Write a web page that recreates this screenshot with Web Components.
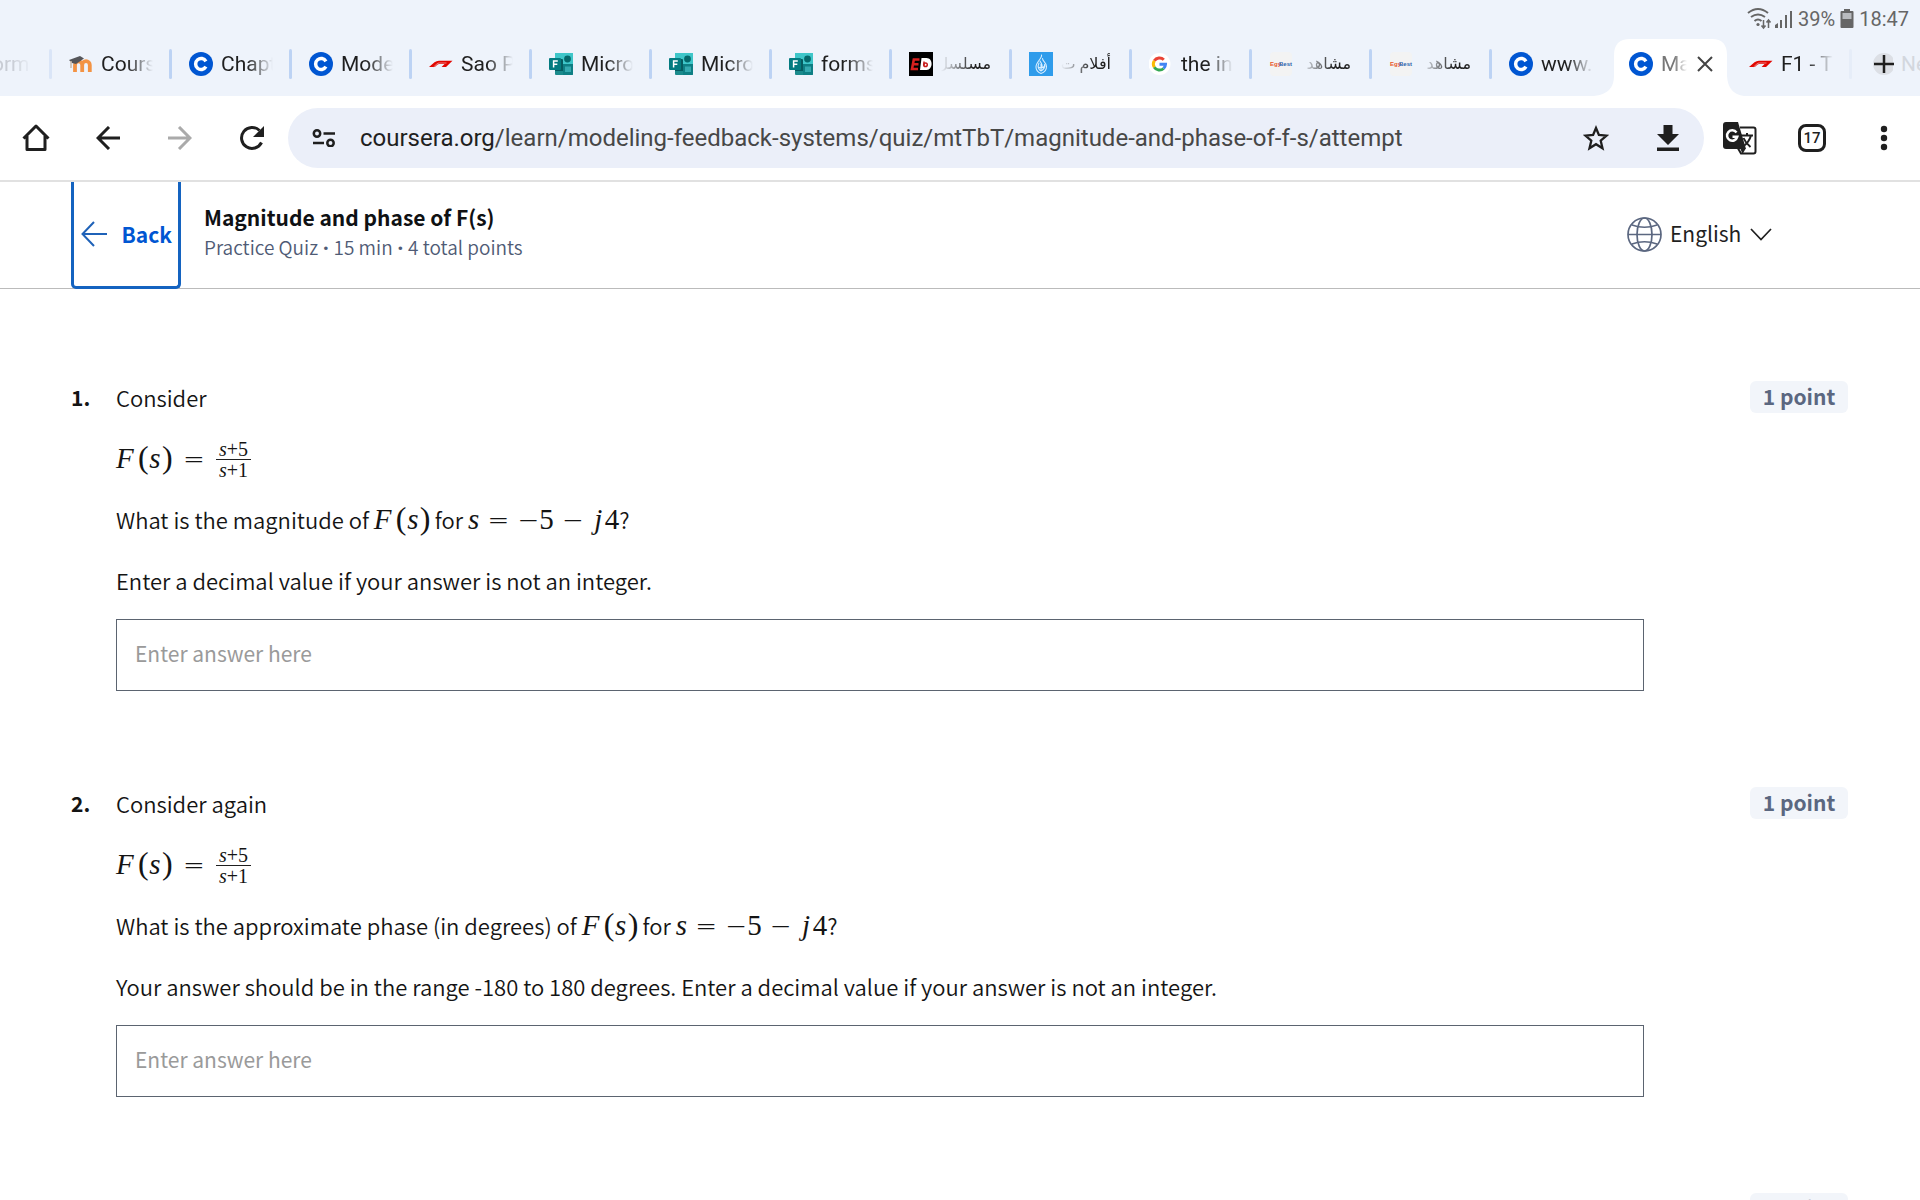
<!DOCTYPE html>
<html lang="en">
<head>
<meta charset="utf-8">
<title>Magnitude and phase of F(s)</title>
<style>
html, body { margin: 0; height: 100%; }
body { background: #fff; color: #1f1f1f; font-family: "Noto Sans CJK SC", "Open Sans", sans-serif; font-size: 22px; }
.dot { font-family: Roboto, sans-serif; }
</style>
</head>
<body>
<browser-window>
  <status-bar slot="status"></status-bar>
  <tab-strip slot="tabs">
    <browser-tab class="cut">orm</browser-tab>
    <browser-tab icon="moodle">Course</browser-tab>
    <browser-tab icon="coursera">Chapter</browser-tab>
    <browser-tab icon="coursera">Model</browser-tab>
    <browser-tab icon="f1">Sao Paulo</browser-tab>
    <browser-tab icon="forms">Micros</browser-tab>
    <browser-tab icon="forms">Micros</browser-tab>
    <browser-tab icon="forms">forms</browser-tab>
    <browser-tab icon="ed" rtl>مسلسل</browser-tab>
    <browser-tab icon="jazeera" rtl>أفلام ت</browser-tab>
    <browser-tab icon="google">the in</browser-tab>
    <browser-tab icon="egybest" rtl>مشاهد</browser-tab>
    <browser-tab icon="egybest" rtl>مشاهد</browser-tab>
    <browser-tab icon="coursera" nodivider>www.</browser-tab>
    <browser-tab icon="coursera" active>Mag</browser-tab>
    <browser-tab icon="f1" faint>F1 - T</browser-tab>
    <browser-tab icon="blank" nodivider dim>Ne</browser-tab>
  </tab-strip>
  <tool-bar slot="toolbar"></tool-bar>
  <quiz-header>
    <span slot="title">Magnitude and phase of F(s)</span>
    <span slot="meta">Practice Quiz<span class="dot"> • </span>15 min<span class="dot"> • </span>4 total points</span>
  </quiz-header>
  <quiz-list>
    <quiz-question number="1.">
      <p>Consider</p>
      <p><math-fn></math-fn><math-eq></math-eq><math-frac><span slot="top"><i>s</i>+5</span><span slot="bottom"><i>s</i>+1</span></math-frac></p>
      <p>What is the magnitude of <math-fn></math-fn> for <math-value></math-value>?</p>
      <span slot="hint">Enter a decimal value if your answer is not an integer.</span>
    </quiz-question>
    <quiz-question number="2.">
      <p>Consider again</p>
      <p><math-fn></math-fn><math-eq></math-eq><math-frac><span slot="top"><i>s</i>+5</span><span slot="bottom"><i>s</i>+1</span></math-frac></p>
      <p>What is the approximate phase (in degrees) of <math-fn></math-fn> for <math-value></math-value>?</p>
      <span slot="hint">Your answer should be in the range -180 to 180 degrees. Enter a decimal value if your answer is not an integer.</span>
    </quiz-question>
    <quiz-question></quiz-question>
  </quiz-list>
</browser-window>

<script>
const define = (name, html) => customElements.define(name, class extends HTMLElement {
  constructor() {
    super();
    this.attachShadow({ mode: 'open' }).innerHTML = typeof html === 'function' ? html(this) : html;
  }
});

const icons = {
  blank: `<circle cx="15" cy="12" r="11" fill="#dcdfe5"/>`,
  coursera: `<circle cx="12" cy="12" r="12" fill="#0056d2"/><path d="M16.9 9.3A5.5 5.5 0 1 0 16.9 14.7" fill="none" stroke="#fff" stroke-width="3.5"/>`,
  moodle: `<path d="M6 20V13a3.6 3.6 0 0 1 7.2 0v7M13.2 13a3.6 3.6 0 0 1 7.6 0v7" fill="none" stroke="#f39344" stroke-width="3.8"/><path d="M0 8 11 4l4 2.500-8 5.500-4-1z" fill="#55565a"/><path d="M2 9v7" stroke="#c9b9a8" stroke-width="1.500"/>`,
  f1: `<path d="M0 15 5.500 10.200Q7.500 8.700 10 8.700H23.500L17 15H12.600L15.500 12H10.200Q9 12 8 12.900L5.800 15z" fill="#e10600"/><path d="M4.600 15 7.800 12Q8.800 11 10.300 11H17.500" fill="none" stroke="#f4b5b4" stroke-width=".7"/>`,
  forms: `<rect x="6" y="1" width="18" height="22" rx="1" fill="#1a8a8c"/><path d="M6 1h18v11H6z" fill="#3fc6c9"/><path d="M14 12h10v10a1 1 0 0 1-1 1h-9z" fill="#0f7f84"/><circle cx="18.500" cy="7" r="3.400" fill="#05686b"/><rect x="16" y="14.500" width="6" height="5.500" fill="#35aab0"/><path d="M6 7h7a1 1 0 0 1 1 1v11H6z" fill="#065b60"/><rect y="6" width="12" height="12" rx="1" fill="#047b80"/><path d="M4.600 15.500V9h4.200M4.600 12.300h3.700" fill="none" stroke="#fff" stroke-width="1.500"/>`,
  ed: `<rect width="24" height="24" fill="#000"/><path d="M10.500 7.500H4.800L3 17H9M4 12.200h5.500" fill="none" stroke="#d8201f" stroke-width="2.600"/><path d="M12.500 6h5c7 0 6.500 12 0 12H11z" fill="#fff"/><path d="M15 9.500v4" stroke="#c61b1b" stroke-width="1.500"/><circle cx="16.500" cy="12.800" r="1.800" fill="none" stroke="#c61b1b" stroke-width="1.500"/>`,
  jazeera: `<rect width="24" height="24" fill="#2f9ceb"/><g fill="none" stroke="#d8eeff" stroke-width="1.100" stroke-linecap="round"><path d="M12.500 3c1 3-5.500 7-5.500 12 0 3 2.400 5.500 5 6.500 3-1 5.500-3.500 5.500-7 0-4-4-5-4-8"/><path d="M10 11c-2 4 0 7 2 8 2-1 4-3 3.500-6.500M11 9c1.500 3 3 3 2 7M9 15c2 1 5 1 7-1M12 12v6"/></g>`,
  google: `<circle cx="10.500" cy="12" r="11" fill="#fff"/><g fill="none" stroke-width="3"><path d="M14.800 7.700A6.100 6.100 0 0 0 5.300 8.800" stroke="#ea4335"/><path d="M5.300 8.800a6.100 6.100 0 0 0 0 6.400" stroke="#fbbc04"/><path d="M5.300 15.200a6.100 6.100 0 0 0 9.300 1.300" stroke="#34a853"/><path d="M14.600 16.500a6.100 6.100 0 0 0 1.900-4.200h-6" stroke="#4285f4"/></g>`,
  egybest: `<rect x="1" width="22" height="24" rx="4" fill="#f3f3f3"/><g font-family="Liberation Sans Narrow, Liberation Sans" font-weight="700" font-size="6"><text x="1" y="14" fill="#e8572a">Egy</text><text x="10" y="14" fill="#2a63ae">Best</text></g>`
};
const svg = (w, h, body, box) => `<svg width="${w}" height="${h}" viewBox="${box || `0 0 ${w} ${h}`}" aria-hidden="true">${body}</svg>`;

define('browser-window', `<style>
:host { display: flex; flex-direction: column; height: 100vh; overflow: hidden; }
.top { background: #eef3fb; flex: none; }
main { flex: 1; min-height: 0; overflow: hidden; }
</style><div class="top"><slot name="status"></slot><slot name="tabs"></slot></div><slot name="toolbar"></slot><main><slot></slot></main>`);

define('status-bar', `<style>
:host { display: flex; justify-content: flex-end; align-items: center; gap: 5px; height: 38px; margin-bottom: -1px; padding-right: 11px; font: 20px/38px Roboto, sans-serif; color: #666; }
svg { display: block; }
</style>
${svg(46, 24, `<g fill="none" stroke="#666" stroke-width="2"><path d="M1 6q10-8 20 0M4 10q7-5 14 0M7.500 14q3.500-3 7 0"/></g><circle cx="11" cy="17.500" r="1.600" fill="#666"/><g stroke="#666" stroke-width="1.500" fill="none"><path d="M16.500 13v8m-2-2.500 2 2.500 2-2.500M21.500 21v-8m-2 2.500 2-2.500 2 2.500"/></g><g fill="#666"><path d="M28 21v-3l3-2v5z"/><path d="M33 13h2v8h-2zM38 8h2v13h-2zM43 4h2v17h-2z"/></g>`)}
<span>39%</span>
${svg(14, 24, `<path d="M4 2h6v2h2.500q1 0 1 1v15q0 1-1 1h-11q-1 0-1-1V5q0-1 1-1H4z" fill="#666"/><path d="M2.500 6h9v6h-9z" fill="#b9bbbf"/>`)}
<span>18:47</span>`);

define('tab-strip', `<style>
:host { display: flex; height: 59px; overflow: hidden; position: relative; }
::slotted(browser-tab) { flex: none; }
button { position: absolute; right: 0; top: 0; width: 72px; height: 53px; border: 0; padding: 0; background: none; color: #1f1f1f; }
svg { display: block; margin: 0 auto; }
</style><slot></slot><button aria-label="New tab">${svg(24, 24, `<path d="M12 3v18M2 12h20" stroke="#1f1f1f" stroke-width="2.500" fill="none"/>`)}</button>`);

define('browser-tab', el => {
  const active = el.hasAttribute('active'), icon = el.getAttribute('icon');
  return `<style>
:host { display: flex; align-items: center; position: relative; box-sizing: border-box; width: 120px; height: 53px; padding: 0 17px 0 19px; font: 21px/30px Roboto, "DejaVu Sans", sans-serif; color: #1f1f1f; }
:host(.cut) { width: 50px; padding: 0; color: #c8ccd4; }
:host(.cut) .label { width: 40px; margin-left: -8px; }
:host(:not([nodivider]):not([active]))::after { content: ""; position: absolute; right: -2px; top: 12px; width: 3px; height: 30px; border-radius: 2px; background: #bdd3f4; }
:host(.cut)::after { background: #dae5f7 !important; }
:host([faint])::after { background: #e6edf8 !important; }
:host([dim]) .label { color: #d3d7de; -webkit-mask-image: none; mask-image: none; }
.tab { display: flex; align-items: center; gap: 8px; border: 0; padding: 0; background: none; color: inherit; font: inherit; text-align: left; }
.label { width: 52px; overflow: hidden; white-space: nowrap; -webkit-mask-image: linear-gradient(to right, #000 50%, transparent); mask-image: linear-gradient(to right, #000 50%, transparent); }
:host([rtl]) .label { direction: rtl; text-align: right; font-size: 16px; width: 50px; -webkit-mask-image: linear-gradient(to left, #000 35%, transparent); mask-image: linear-gradient(to left, #000 35%, transparent); }
svg { display: block; flex: none; }
:host([active]) { z-index: 1; }
:host([active]) .label { width: 26px; color: #777; }
.shape { position: absolute; left: -16px; top: 2px; }
:host([active]) .tab { position: relative; }
.close { position: relative; border: 0; padding: 0; background: none; margin-left: 9px; }
</style>
${active ? `<svg class="shape" width="150" height="57" viewBox="0 0 150 57"><path d="M0 57Q20 55 20 37V16Q20 0 36 0H118Q133 0 133 16V37Q134 55 150 57Z" fill="#fff"/></svg>` : ''}
<button class="tab">${icon ? svg(24, 24, icons[icon]) : ''}<span class="label"><slot></slot></span></button>
${active ? `<button class="close" aria-label="Close tab">${svg(18, 18, `<path d="M2 2 16 16M16 2 2 16" stroke="#444" stroke-width="2"/>`)}</button>` : ''}`;
});

define('tool-bar', `<style>
:host { display: flex; align-items: center; flex: none; height: 84px; border-bottom: 2px solid #e1e1e1; background: #fff; }
button { flex: none; display: flex; align-items: center; justify-content: center; width: 72px; height: 60px; padding: 0; border: 0; background: none; }
form { flex: 1; min-width: 0; display: flex; align-items: center; height: 60px; border-radius: 30px; background: #ebeff9; }
.url { flex: 1; min-width: 0; font: 24px/60px Roboto, sans-serif; color: #474747; white-space: nowrap; overflow: hidden; }
b { font-weight: 400; color: #1f1f1f; }
.count { display: flex; align-items: center; justify-content: center; box-sizing: border-box; width: 28px; height: 28px; border: 3px solid #1f1f1f; border-radius: 8px; font: 500 15px/20px Roboto, sans-serif; color: #1f1f1f; }
</style>
<button aria-label="Home">${svg(28, 28, `<path d="M1.500 14.500 14 2l12.500 12.500M5 12v13.500h18V12" fill="none" stroke="#1f1f1f" stroke-width="3" stroke-linejoin="round"/>`)}</button>
<button aria-label="Back">${svg(24, 24, `<path d="M24 12H2M13 1 2 12l11 11" fill="none" stroke="#1f1f1f" stroke-width="3"/>`)}</button>
<button aria-label="Forward">${svg(24, 24, `<path d="M0 12h22M11 1l11 11-11 11" fill="none" stroke="#aaa" stroke-width="3"/>`)}</button>
<button aria-label="Reload">${svg(26, 26, `<path d="M22.500 17.500A10.500 10.500 0 1 1 20.500 5.500" fill="none" stroke="#1f1f1f" stroke-width="3"/><path d="M25 1v11H14z" fill="#1f1f1f"/>`)}</button>
<form onsubmit="return false">
<button type="button" aria-label="Site information">${svg(24, 18, `<g fill="none" stroke="#1f1f1f" stroke-width="2.500"><circle cx="5" cy="4.500" r="3.200"/><path d="M11.500 4.500H23M1 14h11"/><circle cx="18.500" cy="14" r="3.200"/></g>`)}</button>
<div class="url"><b>coursera.org</b>/learn/modeling-feedback-systems/quiz/mtTbT/magnitude-and-phase-of-f-s/attempt</div>
<button type="button" aria-label="Bookmark">${svg(26, 26, `<path d="m13 3 2.900 7 7.600.7-5.800 5 1.800 7.500-6.500-4-6.500 4 1.800-7.500-5.800-5 7.600-.7z" fill="none" stroke="#1f1f1f" stroke-width="2.300"/>`)}</button>
<button type="button" aria-label="Download">${svg(24, 26, `<path d="M7.500 0h9v9H23L12 20 1 9h6.500zM1 22.500h22V26H1z" fill="#1f1f1f"/>`)}</button>
</form>
<button aria-label="Translate">${svg(34, 34, `<path d="M17 6.500h13.500a2 2 0 0 1 2 2v22a2 2 0 0 1-2 2H18l-3.500-6" fill="none" stroke="#1f1f1f" stroke-width="2"/><path d="M3 1h12l8 27H3a3 3 0 0 1-3-3V4a3 3 0 0 1 3-3z" fill="#1f1f1f"/><path d="M13.500 11.500a5.200 5.200 0 1 0 .8 4.300H9.500" fill="none" stroke="#fff" stroke-width="2.500"/><path d="M18 14.500h12M24 12v2.500M28 14.500q-2 7-8 11M20.500 17q2 5 7 9" fill="none" stroke="#1f1f1f" stroke-width="2"/><path d="m17.500 28 5 0-3 5z" fill="#1f1f1f"/>`)}</button>
<button aria-label="Open tabs"><span class="count">17</span></button>
<button aria-label="Menu">${svg(8, 26, `<g fill="#1f1f1f"><circle cx="4" cy="4" r="3.200"/><circle cx="4" cy="13" r="3.200"/><circle cx="4" cy="22" r="3.200"/></g>`)}</button>`);

define('quiz-header', `<style>
:host { display: flex; align-items: center; height: 107px; padding: 0 148px 0 71px; box-shadow: inset 0 -1px #bbb; }
.back { align-self: stretch; display: flex; align-items: center; justify-content: space-between; box-sizing: border-box; width: 110px; padding: 0 6px 0 7px; border: solid #1463c0; border-width: 0 3px 3px; border-radius: 0 0 5px 5px; background: #fff; color: #0056d2; font: 700 21px/32px "Noto Sans CJK SC", sans-serif; text-decoration: none; }
.titles { flex: 1; margin-left: 23px; padding-bottom: 6px; color: #0f1114; }
h1 { margin: 0; font-size: 21px; line-height: 30px; font-weight: 700; }
.meta { font-size: 19px; line-height: 30px; font-weight: 350; color: #4f5b75; }
label { display: flex; align-items: center; padding-bottom: 2px; }
select { appearance: none; border: 0; padding: 0 0 4px; margin: 0 8px; background: none; font: 21px/32px "Noto Sans CJK SC", sans-serif; color: #1f1f1f; }
svg { display: block; }
</style>
<a class="back" href="#">${svg(26, 26, `<path d="M26 13H1.500M13 1 1.500 13 13 25" fill="none" stroke="#1f62b8" stroke-width="2"/>`)}<span>Back</span></a>
<div class="titles"><h1><slot name="title"></slot></h1><div class="meta"><slot name="meta"></slot></div></div>
<label>${svg(35, 35, `<g fill="none" stroke="#5b6780" stroke-width="1.700"><circle cx="17.500" cy="17.500" r="16.500"/><ellipse cx="17.500" cy="17.500" rx="7.500" ry="16.500"/><path d="M1 17.500h33M5 8q12.500 4.500 25 0M5 27q12.500-4.500 25 0"/></g>`)}
<select aria-label="Language"><option>English</option></select>
${svg(22, 13, `<path d="M1 1l10 10.500L21 1" fill="none" stroke="#1f1f1f" stroke-width="1.700"/>`)}</label>`);

define('quiz-list', `<style>:host { display: flex; flex-direction: column; gap: 94px; padding: 90px 71px 0; }</style><slot></slot>`);

define('quiz-question', el => `<style>
:host { display: flex; align-items: flex-start; color: #141414; font-weight: 350; }
.num { flex: none; width: 45px; line-height: 36px; font-weight: 700; font-size: 21px; }
.body { flex: 1; min-width: 0; display: flex; flex-direction: column; gap: 25px; }
::slotted(p) { margin: 0; height: 36px; line-height: 36px; white-space: nowrap; }
label { display: block; line-height: 36px; }
input { box-sizing: border-box; width: 100%; height: 72px; margin-top: -4px; padding: 0 18px 4px; border: 1px solid #5b6470; border-radius: 0; font: 21px/32px "Noto Sans CJK SC", sans-serif; color: #1f1f1f; display: block; }
input::placeholder { color: #9a9a9a; opacity: 1; }
.points { flex: none; margin: 2px 1px 0 106px; width: 98px; height: 32px; border-radius: 6px; background: #f2f5fa; color: #5b6780; text-align: center; font-size: 21px; line-height: 30px; font-weight: 700; }
</style>
<div class="num">${el.getAttribute('number') || ''}</div>
<div class="body"><slot></slot>${el.hasAttribute('number') ? `<label for="answer"><slot name="hint"></slot></label><input id="answer" placeholder="Enter answer here">` : ''}</div>
<div class="points">1 point</div>`);

const mathStyle = `:host { display: inline-block; font-family: "Liberation Serif", serif; font-weight: 400; font-size: 29px; line-height: 30px; vertical-align: baseline; } span { display: inline-block; } .op { font-family: "DejaVu Sans", sans-serif; font-weight: 200; font-size: 26px; text-align: center; }`;
define('math-fn', `<style>${mathStyle} .f { width: 22px; } .p { width: 10px; text-align: center; font-size: 32px; } .s { width: 14px; text-align: center; }</style><span class="f"><i>F</i></span><span class="p">(</span><span class="s"><i>s</i></span><span class="p">)</span>`);
define('math-eq', `<style>${mathStyle} .op { width: 44px; }</style><span class="op">=</span>`);
define('math-value', `<style>${mathStyle} .op { width: 38px; } .neg { width: 22px; } .j { width: 13px; text-align: center; }</style><i>s</i><span class="op">=</span><span class="op neg">−</span>5<span class="op">−</span><span class="j"><i>j</i></span>4`);
define('math-frac', `<style>:host { display: inline-flex; flex-direction: column; align-items: center; vertical-align: middle; width: 35px; padding-bottom: 5px; font-family: "Liberation Serif", serif; font-weight: 400; font-size: 20px; line-height: 18px; } .bar { width: 100%; height: 1px; margin: 1px 0; background: #1f1f1f; }</style><slot name="top"></slot><div class="bar"></div><slot name="bottom"></slot>`);
</script>
</body>
</html>
